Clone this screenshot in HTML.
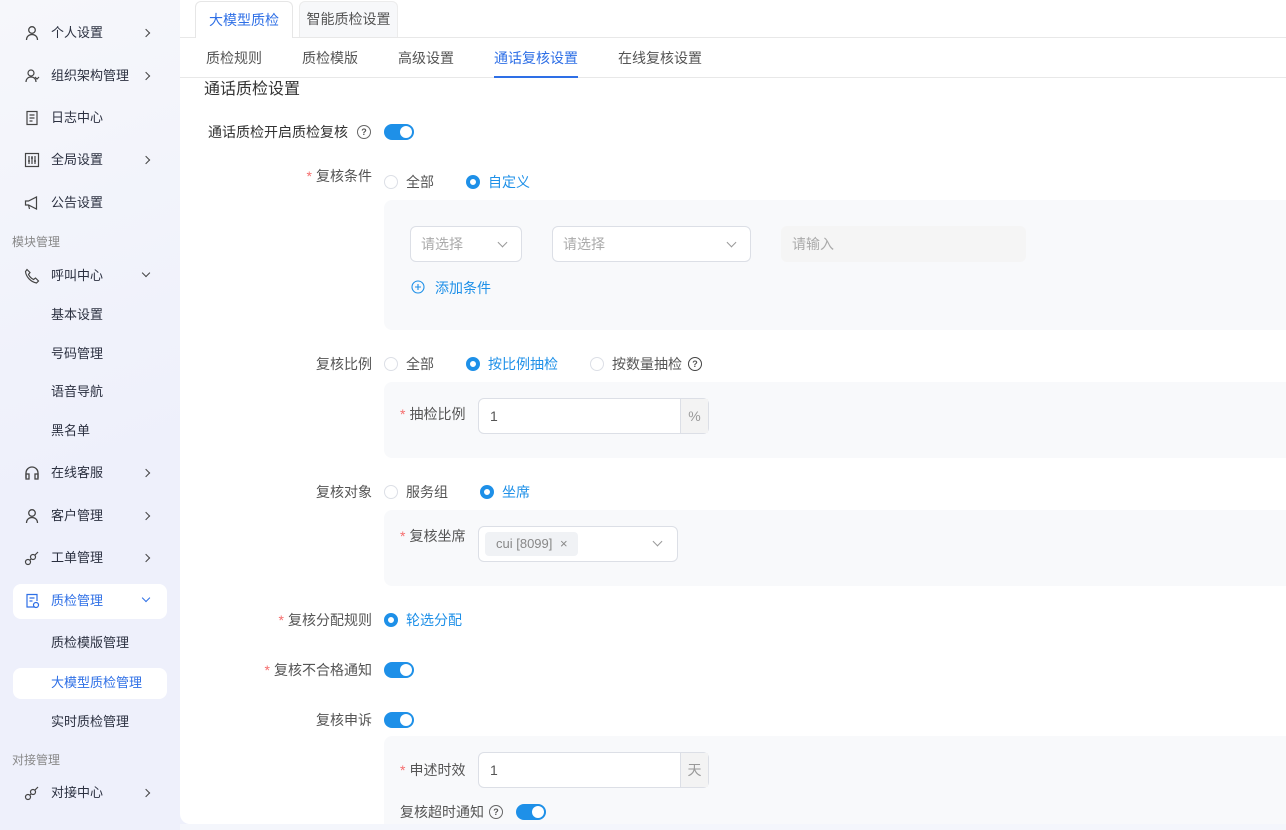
<!DOCTYPE html>
<html><head><meta charset="utf-8"><style>
*{box-sizing:border-box;margin:0;padding:0}
body{width:1286px;height:830px;overflow:hidden;position:relative;font-family:"Liberation Sans","Noto Sans CJK SC",sans-serif;font-size:14px;line-height:20px;color:#333;background:linear-gradient(160deg,#f6f7fb 0%,#eef0fb 40%,#eef0fb 80%,#f7f1f3 100%)}
.a{position:absolute;white-space:nowrap;line-height:20px}
.sb{color:#2b3040;font-size:13px}
.ic{position:absolute;left:24px;width:16px;height:16px}
.arr{position:absolute;left:143px;width:6px;height:6px;border-right:1.3px solid #444;border-bottom:1.3px solid #444}
.r{transform:rotate(-45deg)}
.d{transform:rotate(45deg)}
.main{position:absolute;left:180px;top:0;width:1106px;height:824px;background:#fff;border-bottom-left-radius:10px}
.lbl{position:absolute;right:914px;color:#555;font-size:14px;line-height:20px;white-space:nowrap}
.star{color:#f56c6c;margin-right:4px}
.radio{position:absolute;width:14px;height:14px;border-radius:50%;border:1px solid #dcdfe6;background:#fff}
.radio.on{border:4px solid #1e90e8}
.tg{position:absolute;width:30px;height:16px;border-radius:8px;background:#1e90e8}
.tg:after{content:"";position:absolute;right:2px;top:2px;width:12px;height:12px;border-radius:50%;background:#fff}
.box{position:absolute;left:384px;right:0;background:#f8f9fb;border-radius:8px 0 0 8px}
.q{position:absolute;width:14px;height:14px;border:1.2px solid #666;border-radius:50%;font-size:9px;line-height:12px;text-align:center;color:#555;font-weight:bold}
.inp{position:absolute;border:1px solid #dcdfe6;border-radius:6px;background:#fff}
.chev{position:absolute;width:7px;height:7px;border-right:1px solid #999;border-bottom:1px solid #999;transform:rotate(45deg)}
</style></head><body>
<!-- sidebar -->
<svg class="ic" style="top:25px" viewBox="0 0 16 16" fill="none" stroke="#444" stroke-width="1.3"><circle cx="8" cy="5" r="3.3"/><path d="M2.5 15c0-3.5 2.5-5.5 5.5-5.5s5.5 2 5.5 5.5"/></svg>
<div class="a sb" style="left:51px;top:23px">个人设置</div><div class="arr r" style="top:30px"></div>
<svg class="ic" style="top:68px" viewBox="0 0 16 16" fill="none" stroke="#444" stroke-width="1.2"><circle cx="7" cy="5" r="3"/><path d="M2 14c0-3 2-5 5-5s5 2 5 5M11 9l2 2 2-2"/></svg>
<div class="a sb" style="left:51px;top:66px">组织架构管理</div><div class="arr r" style="top:73px"></div>
<svg class="ic" style="top:110px" viewBox="0 0 16 16" fill="none" stroke="#444" stroke-width="1.2"><rect x="3" y="1.5" width="10" height="13"/><path d="M5.5 5h5M5.5 8h5M5.5 11h3"/></svg>
<div class="a sb" style="left:51px;top:108px">日志中心</div>
<svg class="ic" style="top:152px" viewBox="0 0 16 16" fill="none" stroke="#444" stroke-width="1.2"><rect x="1.5" y="1.5" width="13" height="13"/><path d="M5 4v8M8 4v8M11 4v8M4 9h2M7 6h2M10 9h2"/></svg>
<div class="a sb" style="left:51px;top:150px">全局设置</div><div class="arr r" style="top:157px"></div>
<svg class="ic" style="top:195px" viewBox="0 0 16 16" fill="none" stroke="#444" stroke-width="1.2"><path d="M1.5 6h3l8-4v12l-8-4h-3zM4.5 10l1 4"/></svg>
<div class="a sb" style="left:51px;top:193px">公告设置</div>
<div class="a" style="left:12px;top:232px;color:#888;font-size:12px">模块管理</div>
<svg class="ic" style="top:268px" viewBox="0 0 16 16" fill="none" stroke="#444" stroke-width="1.2"><path d="M3 1.5l3 3-1.5 2c1 2 3 4 5 5l2-1.5 3 3-2 2C7 14 2 9 1.5 3.5z"/></svg>
<div class="a sb" style="left:51px;top:266px">呼叫中心</div><div class="arr d" style="top:270px"></div>
<div class="a sb" style="left:51px;top:305px">基本设置</div>
<div class="a sb" style="left:51px;top:344px">号码管理</div>
<div class="a sb" style="left:51px;top:382px">语音导航</div>
<div class="a sb" style="left:51px;top:421px">黑名单</div>
<svg class="ic" style="top:465px" viewBox="0 0 16 16" fill="none" stroke="#444" stroke-width="1.3"><path d="M2 13V8a6 6 0 0112 0v5"/><rect x="2" y="9" width="3" height="5"/><rect x="11" y="9" width="3" height="5"/></svg>
<div class="a sb" style="left:51px;top:463px">在线客服</div><div class="arr r" style="top:470px"></div>
<svg class="ic" style="top:508px" viewBox="0 0 16 16" fill="none" stroke="#444" stroke-width="1.3"><circle cx="8" cy="5" r="3.3"/><path d="M2.5 15c0-3.5 2.5-5.5 5.5-5.5s5.5 2 5.5 5.5"/></svg>
<div class="a sb" style="left:51px;top:506px">客户管理</div><div class="arr r" style="top:513px"></div>
<svg class="ic" style="top:550px" viewBox="0 0 16 16" fill="none" stroke="#444" stroke-width="1.2"><circle cx="4" cy="12" r="2.5"/><circle cx="9" cy="7" r="2.5"/><path d="M11 5l3-3M6 10l1-1"/></svg>
<div class="a sb" style="left:51px;top:548px">工单管理</div><div class="arr r" style="top:555px"></div>
<div class="a" style="left:13px;top:584px;width:154px;height:35px;background:#fff;border-radius:8px"></div>
<svg class="ic" style="top:593px" viewBox="0 0 16 16" fill="none" stroke="#2e6fe6" stroke-width="1.2"><path d="M11 14H3V1.5h10V8"/><path d="M5.5 5h5M5.5 8h3"/><circle cx="12" cy="12" r="2.5"/></svg>
<div class="a sb" style="left:51px;top:591px;color:#2e6fe6">质检管理</div><div class="arr d" style="top:595px;border-color:#2e6fe6"></div>
<div class="a sb" style="left:51px;top:633px">质检模版管理</div>
<div class="a" style="left:13px;top:668px;width:154px;height:31px;background:#fff;border-radius:8px"></div>
<div class="a sb" style="left:51px;top:673px;color:#2e6fe6">大模型质检管理</div>
<div class="a sb" style="left:51px;top:712px">实时质检管理</div>
<div class="a" style="left:12px;top:750px;color:#888;font-size:12px">对接管理</div>
<svg class="ic" style="top:785px" viewBox="0 0 16 16" fill="none" stroke="#444" stroke-width="1.2"><circle cx="4" cy="12" r="2.5"/><circle cx="9" cy="7" r="2.5"/><path d="M11 5l3-3M6 10l1-1"/></svg>
<div class="a sb" style="left:51px;top:783px">对接中心</div><div class="arr r" style="top:790px"></div>

<div class="main"></div>
<!-- tabs -->
<div class="a" style="left:180px;top:37px;width:1106px;border-top:1px solid #e8e8e8"></div>
<div class="a" style="left:195px;top:1px;width:98px;height:37px;background:#fff;border:1px solid #e6e6e6;border-bottom:none;border-radius:6px 6px 0 0;color:#2e6fe6;text-align:center;line-height:36px">大模型质检</div>
<div class="a" style="left:299px;top:1px;width:99px;height:36px;background:#f7f8fa;border:1px solid #ececec;border-bottom:none;border-radius:6px 6px 0 0;color:#555;text-align:center;line-height:35px">智能质检设置</div>
<div class="a" style="left:180px;top:77px;width:1106px;border-top:1px solid #e8e8e8"></div>
<div class="a" style="left:206px;top:48px;color:#555">质检规则</div>
<div class="a" style="left:302px;top:48px;color:#555">质检模版</div>
<div class="a" style="left:398px;top:48px;color:#555">高级设置</div>
<div class="a" style="left:494px;top:48px;color:#2e6fe6">通话复核设置</div>
<div class="a" style="left:494px;top:76px;width:84px;height:2px;background:#2e6fe6"></div>
<div class="a" style="left:618px;top:48px;color:#555">在线复核设置</div>
<div class="a" style="left:204px;top:79px;font-size:16px;line-height:22px;color:#333">通话质检设置</div>

<div class="a" style="left:208px;top:122px;color:#333">通话质检开启质检复核</div>
<div class="q" style="left:357px;top:125px">?</div>
<div class="tg" style="left:384px;top:124px"></div>

<div class="lbl" style="top:166px"><span class="star">*</span>复核条件</div>
<div class="radio" style="left:384px;top:175px"></div><div class="a" style="left:406px;top:172px;color:#555">全部</div>
<div class="radio on" style="left:466px;top:175px"></div><div class="a" style="left:488px;top:172px;color:#1e90e8">自定义</div>
<div class="box" style="top:200px;height:130px"></div>
<div class="inp" style="left:410px;top:226px;width:112px;height:36px"></div><div class="a" style="left:421px;top:234px;color:#aaa">请选择</div><div class="chev" style="left:499px;top:239px"></div>
<div class="inp" style="left:552px;top:226px;width:199px;height:36px"></div><div class="a" style="left:563px;top:234px;color:#aaa">请选择</div><div class="chev" style="left:728px;top:239px"></div>
<div class="a" style="left:781px;top:226px;width:245px;height:36px;background:#f5f5f5;border-radius:6px"></div><div class="a" style="left:792px;top:234px;color:#aaa">请输入</div>
<svg class="a" style="left:411px;top:280px" width="14" height="14" viewBox="0 0 14 14" fill="none" stroke="#1e90e8" stroke-width="1.1"><circle cx="7" cy="7" r="6"/><path d="M7 4v6M4 7h6"/></svg>
<div class="a" style="left:435px;top:278px;color:#1e90e8">添加条件</div>

<div class="lbl" style="top:354px">复核比例</div>
<div class="radio" style="left:384px;top:357px"></div><div class="a" style="left:406px;top:354px;color:#555">全部</div>
<div class="radio on" style="left:466px;top:357px"></div><div class="a" style="left:488px;top:354px;color:#1e90e8">按比例抽检</div>
<div class="radio" style="left:590px;top:357px"></div><div class="a" style="left:612px;top:354px;color:#555">按数量抽检</div>
<div class="q" style="left:688px;top:357px;border-color:#444">?</div>
<div class="box" style="top:382px;height:76px"></div>
<div class="a" style="left:400px;top:404px;color:#555"><span class="star">*</span>抽检比例</div>
<div class="inp" style="left:478px;top:398px;width:231px;height:36px"></div>
<div class="a" style="left:680px;top:399px;width:28px;height:34px;background:#f3f3f3;border-left:1px solid #dcdfe6;color:#999;text-align:center;line-height:34px">%</div>
<div class="a" style="left:490px;top:406px;color:#555;font-size:14px">1</div>

<div class="lbl" style="top:482px">复核对象</div>
<div class="radio" style="left:384px;top:485px"></div><div class="a" style="left:406px;top:482px;color:#555">服务组</div>
<div class="radio on" style="left:480px;top:485px"></div><div class="a" style="left:502px;top:482px;color:#1e90e8">坐席</div>
<div class="box" style="top:510px;height:76px"></div>
<div class="a" style="left:400px;top:526px;color:#555"><span class="star">*</span>复核坐席</div>
<div class="inp" style="left:478px;top:526px;width:200px;height:36px"></div>
<div class="a" style="left:485px;top:532px;width:93px;height:24px;background:#f0f2f5;border-radius:4px;color:#888;line-height:24px;padding-left:11px;font-size:13px">cui [8099] <span style="margin-left:4px">×</span></div>
<div class="chev" style="left:654px;top:538px"></div>

<div class="lbl" style="top:610px"><span class="star">*</span>复核分配规则</div>
<div class="radio on" style="left:384px;top:613px"></div><div class="a" style="left:406px;top:610px;color:#1e90e8">轮选分配</div>
<div class="lbl" style="top:660px"><span class="star">*</span>复核不合格通知</div>
<div class="tg" style="left:384px;top:662px"></div>
<div class="lbl" style="top:710px">复核申诉</div>
<div class="tg" style="left:384px;top:712px"></div>
<div class="box" style="top:736px;height:88px;border-radius:8px 0 0 0"></div>
<div class="a" style="left:400px;top:760px;color:#555"><span class="star">*</span>申述时效</div>
<div class="inp" style="left:478px;top:752px;width:231px;height:36px"></div>
<div class="a" style="left:680px;top:753px;width:28px;height:34px;background:#f3f3f3;border-left:1px solid #dcdfe6;color:#999;text-align:center;line-height:34px">天</div>
<div class="a" style="left:490px;top:760px;color:#555;font-size:14px">1</div>
<div class="a" style="left:400px;top:802px;color:#555">复核超时通知</div>
<div class="q" style="left:489px;top:805px">?</div>
<div class="tg" style="left:516px;top:804px"></div>
<div class="a" style="left:180px;top:824px;width:1106px;height:6px;background:#f4f6fc"></div>
</body></html>
